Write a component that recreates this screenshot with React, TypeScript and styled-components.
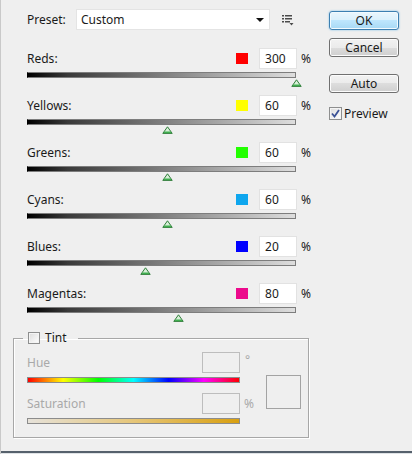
import React from "react";
import styled, { createGlobalStyle } from "styled-components";

const GlobalStyle = createGlobalStyle`
  html, body {
    margin: 0;
    padding: 0;
    background: #efefef;
  }
  * {
    box-sizing: border-box;
  }
`;

interface ChannelType {
    name: string;
    color: string;
    value: number;
}

const channels: ChannelType[] = [
    { name: "Reds", color: "#ff0000", value: 300 },
    { name: "Yellows", color: "#ffff00", value: 60 },
    { name: "Greens", color: "#22ff00", value: 60 },
    { name: "Cyans", color: "#0ea6ee", value: 60 },
    { name: "Blues", color: "#0000ff", value: 20 },
    { name: "Magentas", color: "#ec0a8c", value: 80 },
];

const MIN = -200;
const MAX = 300;

const Dialog = styled.div`
  width: 412px;
  height: 454px;
  display: flex;
  align-items: flex-start;
  padding: 9px 0 0 13px;
  background: #efefef;
  box-shadow: inset 1px 0 0 #c9c9c9, inset 0 -1px 0 #dfe3e6, inset 0 -3px 0 #56616c;
  font-family: "Noto Sans", "Open Sans", sans-serif;
  font-size: 12px;
  color: #1a1a1a;
`;

const MainColumn = styled.div`
  width: 298px;
  display: flex;
  flex-direction: column;
`;

const PresetRow = styled.div`
  display: flex;
  align-items: center;
  height: 21px;
  padding-left: 14px;
`;

const PresetLabel = styled.span`
  width: 49px;
  line-height: 21px;
`;

const Select = styled.div`
  width: 194px;
  height: 21px;
  display: flex;
  align-items: center;
  justify-content: space-between;
  padding: 0 5px 0 4px;
  background: #ffffff;
  border: 1px solid #e4e4e4;
`;

const MenuButton = styled.span`
  display: flex;
  margin-left: 12px;
  margin-top: 1px;
`;

const ChannelList = styled.div`
  display: flex;
  flex-direction: column;
  margin-top: 18px;
  padding-left: 14px;
`;

const Channel = styled.div`
  display: flex;
  flex-direction: column;
  margin-bottom: 8px;
`;

const ChannelHeader = styled.div`
  display: flex;
  align-items: center;
  height: 21px;
`;

const ChannelLabel = styled.span`
  flex: 1;
`;

const Swatch = styled.span<{ $color: string }>`
  width: 12px;
  height: 11px;
  margin-right: 11px;
  background: ${(props) => props.$color};
`;

const ValueBox = styled.div<{ $disabled?: boolean }>`
  width: 38px;
  height: 21px;
  padding-left: 5px;
  line-height: 19px;
  background: ${(props) => (props.$disabled ? "#efefef" : "#ffffff")};
  border: 1px solid ${(props) => (props.$disabled ? "#bdbdbd" : "#e2e2e2")};
`;

const Unit = styled.span`
  margin-left: 4px;
`;

const Slider = styled.div`
  position: relative;
  width: 269px;
  height: 15px;
  margin-top: 3px;
`;

const Track = styled.div<{ $background: string }>`
  height: 6px;
  background: ${(props) => props.$background};
  border: 1px solid #7d7d7d;
  border-left-color: #000;
`;

const Thumb = styled.svg`
  position: absolute;
  top: 7px;
  width: 11px;
  height: 8px;
  margin-left: -5px;
`;

const TintGroup = styled.fieldset`
  width: 296px;
  min-width: 0;
  margin: 0;
  padding: 6px 6px 13px 13px;
  border: 1px solid #a7a7a7;
  box-shadow: 1px 1px 0 #ffffff, inset 1px 1px 0 #ffffff;
`;

const TintLegend = styled.legend`
  display: flex;
  align-items: center;
  height: 16px;
  margin-left: -4px;
  padding: 0 11px 0 5px;
  gap: 5px;
  line-height: 16px;
`;

const TintBody = styled.div`
  display: flex;
  align-items: flex-start;
`;

const TintFields = styled.div`
  display: grid;
  grid-template-columns: 213px 26px;
`;

const FieldHeader = styled.div<{ $spaced?: boolean }>`
  grid-column: 1;
  display: flex;
  align-items: center;
  height: 21px;
  margin-top: ${(props) => (props.$spaced ? "10px" : "0")};
  color: #a9a9a9;
`;

const FieldUnit = styled.span<{ $spaced?: boolean; $raised?: boolean }>`
  grid-column: 2;
  padding-left: ${(props) => (props.$raised ? "5px" : "4px")};
  margin-top: ${(props) => (props.$spaced ? "10px" : "0")};
  line-height: ${(props) => (props.$raised ? "15px" : "21px")};
  color: #a9a9a9;
`;

const FieldBar = styled.div<{ $background: string }>`
  grid-column: 1;
  height: 6px;
  margin-top: 4px;
  background: ${(props) => props.$background};
  border: 1px solid #8c8c8c;
`;

const ColorPreview = styled.div`
  width: 35px;
  height: 34px;
  margin-top: 23px;
  border: 1px solid #a3a3a3;
`;

const SideColumn = styled.div`
  width: 70px;
  margin-left: 18px;
  padding-top: 2px;
  display: flex;
  flex-direction: column;
`;

const Button = styled.button<{ $primary?: boolean; $gap: number }>`
  width: 70px;
  height: 19px;
  margin-top: ${(props) => props.$gap}px;
  padding: 0;
  font-family: inherit;
  font-size: 12px;
  line-height: 17px;
  color: #1a1a1a;
  border-radius: 3px;
  border: 1px solid ${(props) => (props.$primary ? "#3c7fb1" : "#707070")};
  background: ${(props) =>
    props.$primary
      ? "linear-gradient(#eaf6fd, #d9f0fc 50%, #bee6fd 50%, #a7d9f5)"
      : "linear-gradient(#f2f2f2, #ebebeb 50%, #dddddd 50%, #cfcfcf)"};
  box-shadow: ${(props) => (props.$primary ? "0 0 2px #6fb9e8, inset 0 0 0 1px #f2fafe" : "inset 0 0 0 1px #fcfcfc")};
`;

const CheckRow = styled.label`
  display: flex;
  align-items: center;
  gap: 2px;
  margin-top: 14px;
  line-height: 13px;
`;

const CheckBox = styled.span<{ $size: number }>`
  position: relative;
  width: ${(props) => props.$size}px;
  height: ${(props) => props.$size}px;
  border: 1px solid #8e8f8f;
  background: linear-gradient(135deg, #dcdcdc, #ffffff);
  box-shadow: inset 0 0 0 1px #f4f4f4;
`;

const CheckMark = styled.svg`
  position: absolute;
  left: 1px;
  top: 1px;
`;

const Check = ({ size, checked }: { size: number; checked?: boolean }) => (
    <CheckBox $size={size}>
        {checked && (
            <CheckMark width="9" height="9" viewBox="0 0 9 9">
                <path d="M1 4.5 L3.5 7.5 L8 1" fill="none" stroke="#3b5296" strokeWidth="1.8" />
            </CheckMark>
        )}
    </CheckBox>
);

const SliderThumb = ({ value }: { value: number }) => (
    <Thumb viewBox="0 0 11 8" style={{ left: `${((value - MIN) / (MAX - MIN)) * 100}%` }}>
        <path d="M5.5 0.8 L10.2 7.4 L0.8 7.4 Z" fill="#d8f0d8" stroke="#2f7d3a" strokeWidth="1" />
        <path d="M2.6 5.5 L8.4 5.5 L9.5 7 L1.5 7 Z" fill="#3fae4e" />
    </Thumb>
);

const ChannelRow = ({ channel }: { channel: ChannelType }) => (
    <Channel>
        <ChannelHeader>
            <ChannelLabel>{channel.name}:</ChannelLabel>
            <Swatch $color={channel.color} />
            <ValueBox>{channel.value}</ValueBox>
            <Unit>%</Unit>
        </ChannelHeader>
        <Slider>
            <Track $background="linear-gradient(to right, #000000, #3a3a3a 15%, #dedede)" />
            <SliderThumb value={channel.value} />
        </Slider>
    </Channel>
);

const App = () => (
    <>
        <GlobalStyle />
        <Dialog>
            <MainColumn>
                <PresetRow>
                    <PresetLabel>Preset:</PresetLabel>
                    <Select>
                        <span>Custom</span>
                        <svg width="8" height="4" viewBox="0 0 8 4">
                            <path d="M0 0 H8 L4 4 Z" fill="#111" />
                        </svg>
                    </Select>
                    <MenuButton>
                        <svg width="12" height="11" viewBox="0 0 12 11">
                            <g fill="#4a4a4a">
                                <rect x="0" y="0" width="2" height="1.5" />
                                <rect x="3" y="0" width="7" height="1.5" />
                                <rect x="0" y="3" width="2" height="1.5" />
                                <rect x="3" y="3" width="7" height="1.5" />
                                <rect x="0" y="6" width="2" height="1.5" />
                                <rect x="3" y="6" width="5" height="1.5" />
                                <path d="M7.5 8 H11.5 L9.5 10.5 Z" />
                            </g>
                        </svg>
                    </MenuButton>
                </PresetRow>

                <ChannelList>
                    {channels.map((channel) => (
                        <ChannelRow key={channel.name} channel={channel} />
                    ))}
                </ChannelList>

                <TintGroup>
                    <TintLegend>
                        <Check size={12} />
                        <span>Tint</span>
                    </TintLegend>
                    <TintBody>
                        <TintFields>
                            <FieldHeader>
                                <ChannelLabel>Hue</ChannelLabel>
                                <ValueBox $disabled />
                            </FieldHeader>
                            <FieldUnit $raised>°</FieldUnit>
                            <FieldBar $background="linear-gradient(to right, #ff0000, #ffff00, #00ff00, #00ffff, #0000ff, #ff00ff, #ff0000)" />
                            <FieldHeader $spaced>
                                <ChannelLabel>Saturation</ChannelLabel>
                                <ValueBox $disabled />
                            </FieldHeader>
                            <FieldUnit $spaced>%</FieldUnit>
                            <FieldBar $background="linear-gradient(to right, #e6e2da, #e6c679 50%, #d9a010)" />
                        </TintFields>
                        <ColorPreview />
                    </TintBody>
                </TintGroup>
            </MainColumn>

            <SideColumn>
                <Button $primary $gap={0}>OK</Button>
                <Button $gap={8}>Cancel</Button>
                <Button $gap={17}>Auto</Button>
                <CheckRow>
                    <Check size={13} checked />
                    <span>Preview</span>
                </CheckRow>
            </SideColumn>
        </Dialog>
    </>
);

export default App;
